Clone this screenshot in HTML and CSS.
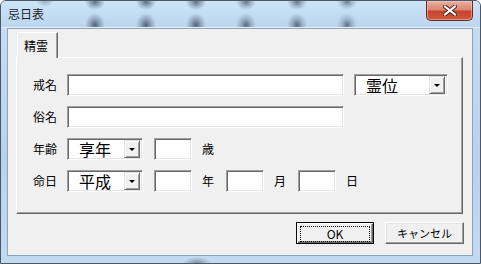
FILE: index.html
```html
<!DOCTYPE html>
<html lang="ja">
<head>
    <meta charset="UTF-8">
    <title>忌日表</title>
    <link rel="stylesheet" href="styles.css">
</head>
<body>
    <div class="janela">
        <div class="barra-titulo">
            <span class="titulo">忌日表</span>
            <div class="fechar">
                <svg width="14" height="11" viewBox="0 0 14 11">
                    <path d="M2 1.5 L12 9.5 M12 1.5 L2 9.5" stroke="#4a1a12" stroke-width="4" stroke-linecap="square"/>
                    <path d="M2 1.5 L12 9.5 M12 1.5 L2 9.5" stroke="#fff" stroke-width="2.2" stroke-linecap="square"/>
                </svg>
            </div>
        </div>

        <div class="cliente">
            <div class="abas">
                <div class="aba">精霊</div>
            </div>

            <div class="painel">
                <div class="linha">
                    <span class="rotulo">戒名</span>
                    <input class="campo largo" type="text">
                    <div class="combo combo-rei">
                        <span class="combo-texto">霊位</span>
                        <span class="seta"></span>
                    </div>
                </div>

                <div class="linha">
                    <span class="rotulo">俗名</span>
                    <input class="campo largo" type="text">
                </div>

                <div class="linha">
                    <span class="rotulo">年齢</span>
                    <div class="combo combo-curto">
                        <span class="combo-texto">享年</span>
                        <span class="seta"></span>
                    </div>
                    <input class="campo curto" type="text">
                    <span class="unidade">歳</span>
                </div>

                <div class="linha">
                    <span class="rotulo">命日</span>
                    <div class="combo combo-curto">
                        <span class="combo-texto">平成</span>
                        <span class="seta"></span>
                    </div>
                    <input class="campo curto" type="text">
                    <span class="unidade">年</span>
                    <input class="campo curto" type="text">
                    <span class="unidade">月</span>
                    <input class="campo curto" type="text">
                    <span class="unidade">日</span>
                </div>
            </div>

            <div class="botoes">
                <button class="botao padrao"><span class="foco">OK</span></button>
                <button class="botao">キャンセル</button>
            </div>
        </div>
    </div>
</body>
</html>
```

FILE: styles.css
```css
html, body {
    margin: 0;
    padding: 0;
    background: #ffffff;
}

body {
    width: 481px;
    height: 264px;
    overflow: hidden;
    font-family: "Noto Sans CJK JP", "DejaVu Sans", sans-serif;
}

.janela {
    box-sizing: border-box;
    width: 481px;
    height: 264px;
    border: 1px solid #4a5868;
    border-radius: 6px 6px 0 0;
    background:
        radial-gradient(ellipse 14px 6px at 196px 262px, rgba(55, 72, 92, 0.5), rgba(55, 72, 92, 0)),
        linear-gradient(to bottom, #c9def3, #b9d2ec 60%, #c4daf1);
    padding: 0 7px 7px 6px;
    display: flex;
    flex-direction: column;
}

/* manchas escuras do fundo vistas pelo vidro */
.barra-titulo {
    box-sizing: border-box;
    height: 27px;
    margin: 0 -7px 0 -6px;
    padding: 0 7px 0 7px;
    display: flex;
    align-items: flex-start;
    justify-content: space-between;
    border-radius: 5px 5px 0 0;
    border-bottom: 1px solid #e2eefa;
    background:
        radial-gradient(ellipse 10px 8px at 94px 1px, rgba(55, 72, 92, 0.75), rgba(55, 72, 92, 0.35) 50%, rgba(55, 72, 92, 0)),
        radial-gradient(ellipse 10px 12px at 94px 24px, rgba(55, 72, 92, 0.8), rgba(55, 72, 92, 0.35) 50%, rgba(55, 72, 92, 0)),
        radial-gradient(ellipse 10px 8px at 145px 1px, rgba(55, 72, 92, 0.75), rgba(55, 72, 92, 0.35) 50%, rgba(55, 72, 92, 0)),
        radial-gradient(ellipse 10px 12px at 145px 24px, rgba(55, 72, 92, 0.8), rgba(55, 72, 92, 0.35) 50%, rgba(55, 72, 92, 0)),
        radial-gradient(ellipse 10px 8px at 195px 1px, rgba(55, 72, 92, 0.75), rgba(55, 72, 92, 0.35) 50%, rgba(55, 72, 92, 0)),
        radial-gradient(ellipse 10px 12px at 195px 24px, rgba(55, 72, 92, 0.8), rgba(55, 72, 92, 0.35) 50%, rgba(55, 72, 92, 0)),
        radial-gradient(ellipse 10px 8px at 245px 1px, rgba(55, 72, 92, 0.7), rgba(55, 72, 92, 0.3) 50%, rgba(55, 72, 92, 0)),
        radial-gradient(ellipse 10px 12px at 245px 24px, rgba(55, 72, 92, 0.75), rgba(55, 72, 92, 0.3) 50%, rgba(55, 72, 92, 0)),
        radial-gradient(ellipse 10px 8px at 296px 1px, rgba(55, 72, 92, 0.7), rgba(55, 72, 92, 0.3) 50%, rgba(55, 72, 92, 0)),
        radial-gradient(ellipse 10px 12px at 296px 24px, rgba(55, 72, 92, 0.75), rgba(55, 72, 92, 0.3) 50%, rgba(55, 72, 92, 0)),
        radial-gradient(ellipse 10px 8px at 346px 1px, rgba(55, 72, 92, 0.65), rgba(55, 72, 92, 0.25) 50%, rgba(55, 72, 92, 0)),
        radial-gradient(ellipse 10px 12px at 346px 24px, rgba(55, 72, 92, 0.7), rgba(55, 72, 92, 0.25) 50%, rgba(55, 72, 92, 0)),
        radial-gradient(ellipse 9px 6px at 44px 0px, rgba(55, 72, 92, 0.35), rgba(55, 72, 92, 0)),
        linear-gradient(to bottom, #cde3f8, #bcd6f0);
}

.titulo {
    margin-top: 6px;
    font-size: 12px;
    line-height: 14px;
    color: #1e1e1e;
}

.fechar {
    box-sizing: border-box;
    width: 47px;
    height: 20px;
    border: 1px solid #6b2a20;
    border-top: none;
    border-radius: 0 0 5px 5px;
    background: linear-gradient(to bottom, #eab0a2, #d98672 45%, #c9452f 55%, #d0573c);
    display: flex;
    align-items: center;
    justify-content: center;
    box-shadow: inset 0 0 0 1px rgba(255, 220, 210, 0.45);
}

.cliente {
    box-sizing: border-box;
    width: 466px;
    height: 228px;
    border: 1px solid #8ea3bb;
    background: #f0f0f0;
    display: flex;
    flex-direction: column;
}

.abas {
    display: flex;
    padding-left: 9px;
    margin-top: 3px;
    margin-bottom: -1px;
}

.aba {
    position: relative;
    box-sizing: border-box;
    width: 41px;
    height: 26px;
    padding-top: 6px;
    padding-left: 6px;
    background: #f0f0f0;
    border-top: 1px solid #ffffff;
    border-left: 1px solid #ffffff;
    border-right: 1px solid #696969;
    box-shadow: inset -1px 0 0 #a0a0a0;
    font-size: 12px;
    line-height: 14px;
    color: #000000;
}

.painel {
    box-sizing: border-box;
    width: 447px;
    height: 157px;
    margin-left: 8px;
    border-top: 1px solid #ffffff;
    border-left: 1px solid #ffffff;
    border-right: 1px solid #696969;
    border-bottom: 1px solid #696969;
    box-shadow: inset -1px -1px 0 #a0a0a0;
    padding: 16px 0 0 16px;
    display: flex;
    flex-direction: column;
    gap: 10px;
}

.linha {
    display: flex;
    align-items: center;
    height: 22px;
}

.rotulo {
    width: 34px;
    font-size: 12px;
    line-height: 14px;
    color: #000000;
}

.campo {
    box-sizing: border-box;
    height: 22px;
    margin: 0;
    padding: 0 3px;
    background: #ffffff;
    border: 1px solid;
    border-color: #a0a0a0 #ffffff #ffffff #a0a0a0;
    box-shadow: inset 1px 1px 0 #696969, inset -1px -1px 0 #e3e3e3;
    outline: none;
    font-size: 12px;
}

.largo {
    width: 277px;
}

.curto {
    width: 38px;
}

.combo {
    box-sizing: border-box;
    height: 22px;
    background: #ffffff;
    border: 1px solid;
    border-color: #a0a0a0 #ffffff #ffffff #a0a0a0;
    box-shadow: inset 1px 1px 0 #696969, inset -1px -1px 0 #e3e3e3;
    display: flex;
    align-items: center;
    justify-content: space-between;
    padding: 2px 2px 2px 11px;
}

.combo-rei {
    width: 94px;
    margin-left: 10px;
}

.combo-curto {
    width: 76px;
    margin-right: 11px;
}

.combo-texto {
    font-size: 16px;
    line-height: 18px;
    color: #000000;
}

.seta {
    box-sizing: border-box;
    width: 16px;
    height: 18px;
    background: #f0f0f0;
    border: 1px solid;
    border-color: #e3e3e3 #696969 #696969 #e3e3e3;
    box-shadow: inset 1px 1px 0 #ffffff, inset -1px -1px 0 #a0a0a0;
    display: flex;
    align-items: center;
    justify-content: center;
}

.seta::after {
    content: "";
    width: 0;
    height: 0;
    border-left: 3px solid transparent;
    border-right: 3px solid transparent;
    border-top: 3px solid #000000;
}

.unidade {
    width: 12px;
    margin-left: 10px;
    margin-right: 12px;
    font-size: 12px;
    line-height: 14px;
    color: #000000;
}

.botoes {
    display: flex;
    justify-content: flex-end;
    gap: 11px;
    margin-top: 8px;
    margin-right: 8px;
}

.botao {
    box-sizing: border-box;
    width: 79px;
    height: 22px;
    margin: 0;
    padding: 0;
    background: #f0f0f0;
    border: 1px solid;
    border-color: #ffffff #696969 #696969 #ffffff;
    box-shadow: inset -1px -1px 0 #a0a0a0, inset 1px 1px 0 #e3e3e3;
    font-family: "Noto Sans CJK JP", "DejaVu Sans", sans-serif;
    font-size: 11px;
    line-height: 14px;
    color: #000000;
}

.padrao {
    width: 78px;
    border: 1px solid #000000;
    box-shadow: inset 1px 1px 0 #ffffff, inset -1px -1px 0 #696969, inset -2px -2px 0 #a0a0a0;
    padding: 3px;
}

.foco {
    display: block;
    height: 14px;
    border: 1px dotted #000000;
    font-size: 12px;
    line-height: 14px;
}
```
